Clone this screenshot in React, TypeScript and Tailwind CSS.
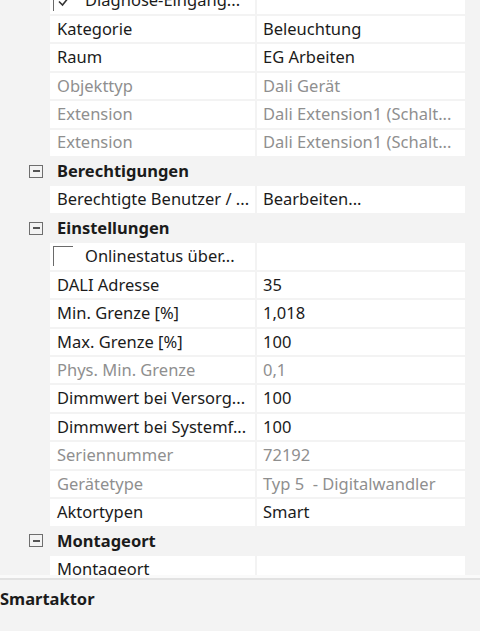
import React from "react";

type Row =
  | { kind: "header"; label: string }
  | {
      kind: "item";
      label: string;
      value?: string;
      grayLabel?: boolean;
      grayValue?: boolean;
      check?: "on" | "off";
    };

const rows: Row[] = [
  { kind: "item", label: "Diagnose-Eingang...", check: "on" },
  { kind: "item", label: "Kategorie", value: "Beleuchtung" },
  { kind: "item", label: "Raum", value: "EG Arbeiten" },
  { kind: "item", label: "Objekttyp", value: "Dali Gerät", grayLabel: true, grayValue: true },
  { kind: "item", label: "Extension", value: "Dali Extension1 (Schalt...", grayLabel: true, grayValue: true },
  { kind: "item", label: "Extension", value: "Dali Extension1 (Schalt...", grayLabel: true, grayValue: true },
  { kind: "header", label: "Berechtigungen" },
  { kind: "item", label: "Berechtigte Benutzer / ...", value: "Bearbeiten..." },
  { kind: "header", label: "Einstellungen" },
  { kind: "item", label: "Onlinestatus über...", check: "off" },
  { kind: "item", label: "DALI Adresse", value: "35" },
  { kind: "item", label: "Min. Grenze [%]", value: "1,018" },
  { kind: "item", label: "Max. Grenze [%]", value: "100" },
  { kind: "item", label: "Phys. Min. Grenze", value: "0,1", grayLabel: true, grayValue: true },
  { kind: "item", label: "Dimmwert bei Versorg...", value: "100" },
  { kind: "item", label: "Dimmwert bei Systemf...", value: "100" },
  { kind: "item", label: "Seriennummer", value: "72192", grayLabel: true, grayValue: true },
  { kind: "item", label: "Gerätetype", value: "Typ 5  - Digitalwandler", grayLabel: true, grayValue: true },
  { kind: "item", label: "Aktortypen", value: "Smart" },
  { kind: "header", label: "Montageort" },
  { kind: "item", label: "Montageort" },
];

function MinusBox() {
  return (
    <div className="w-[14px] h-[13px] border-[1.5px] border-[#6e6e6e] flex items-center justify-center">
      <div className="w-[7px] h-[1.5px] bg-[#555555]" />
    </div>
  );
}

function CheckBox({ on }: { on: boolean }) {
  return (
    <div className="relative w-[20px] h-[20px] border-t-[1.5px] border-l-[1.5px] border-[#6a6a6a] shrink-0">
      {on && (
        <svg className="absolute left-[3px] top-[2px]" width="14" height="14" viewBox="0 0 14 14">
          <path d="M2 7.5 L5.5 11 L12 3" fill="none" stroke="#333" strokeWidth="1.6" />
        </svg>
      )}
    </div>
  );
}

export default function App() {
  return (
    <div
      className="w-[480px] h-[631px] bg-[#f3f3f3] flex flex-col overflow-hidden text-[16.5px] text-[#1b1b1b]"
      style={{ fontFamily: '"Noto Sans", "Open Sans", sans-serif' }}
    >
      <div className="h-[575px] overflow-hidden shrink-0">
        <div className="-mt-[12.7px] flex flex-col">
          {rows.map((r, i) =>
            r.kind === "header" ? (
              <div key={i} className="h-[26.44px] mb-[2px] flex items-center shrink-0">
                <div className="w-[29px]" />
                <MinusBox />
                <div className="w-[14px]" />
                <span className="font-bold leading-none">{r.label}</span>
              </div>
            ) : (
              <div key={i} className="h-[26.44px] mb-[2px] flex shrink-0">
                <div className="w-[50px] shrink-0" />
                <div
                  className={
                    "w-[205px] shrink-0 bg-white flex items-center overflow-hidden whitespace-nowrap leading-none " +
                    (r.grayLabel ? "text-[#8f8f8f]" : "")
                  }
                >
                  {r.check ? (
                    <div className="flex items-center pl-[3px]">
                      <CheckBox on={r.check === "on"} />
                      <span className="pl-[12px]">{r.label}</span>
                    </div>
                  ) : (
                    <span className="pl-[7px]">{r.label}</span>
                  )}
                </div>
                <div className="w-[2px] shrink-0" />
                <div
                  className={
                    "w-[208px] shrink-0 bg-white flex items-center overflow-hidden whitespace-pre leading-none pl-[6px] " +
                    (r.grayValue ? "text-[#8f8f8f]" : "")
                  }
                >
                  {r.value ?? ""}
                </div>
              </div>
            )
          )}
        </div>
      </div>
      <div className="h-[3px] bg-[#fafafa] shrink-0" />
      <div className="h-[2px] bg-[#e2e2e2] shrink-0" />
      <div className="flex-1 pt-[7px]">
        <span className="font-bold leading-none">Smartaktor</span>
      </div>
    </div>
  );
}
